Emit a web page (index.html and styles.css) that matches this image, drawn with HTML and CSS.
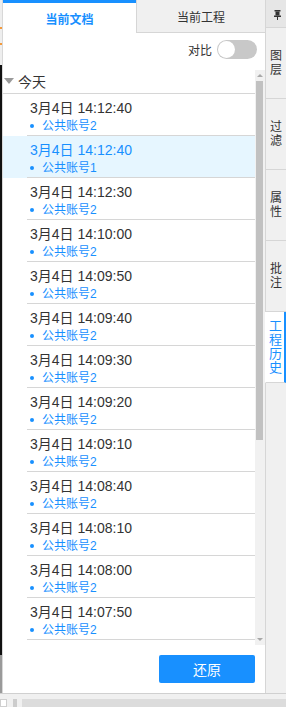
FILE: index.html
```html
<!DOCTYPE html>
<html lang="zh-CN">
<head>
    <meta charset="UTF-8">
    <meta name="viewport" content="width=device-width, initial-scale=1.0">
    <link rel="stylesheet" href="styles.css">
    <title>工程历史</title>
</head>
<body>
    <div class="app">
        <div class="main">
            <div class="edge"></div>

            <div class="panel">
                <div class="tabs">
                    <span class="tab active">当前文档</span>
                    <span class="tab">当前工程</span>
                </div>

                <div class="toolbar">
                    <span class="label">对比</span>
                    <span class="switch"><span class="knob"></span></span>
                </div>

                <div class="history">
                    <div class="list">
                        <div class="group"><span class="caret"></span>今天</div>

                        <div class="item"><div class="inner"><div class="time">3月4日 14:12:40</div><div class="user">公共账号2</div></div></div>
                        <div class="item selected"><div class="inner"><div class="time">3月4日 14:12:40</div><div class="user">公共账号1</div></div></div>
                        <div class="item"><div class="inner"><div class="time">3月4日 14:12:30</div><div class="user">公共账号2</div></div></div>
                        <div class="item"><div class="inner"><div class="time">3月4日 14:10:00</div><div class="user">公共账号2</div></div></div>
                        <div class="item"><div class="inner"><div class="time">3月4日 14:09:50</div><div class="user">公共账号2</div></div></div>
                        <div class="item"><div class="inner"><div class="time">3月4日 14:09:40</div><div class="user">公共账号2</div></div></div>
                        <div class="item"><div class="inner"><div class="time">3月4日 14:09:30</div><div class="user">公共账号2</div></div></div>
                        <div class="item"><div class="inner"><div class="time">3月4日 14:09:20</div><div class="user">公共账号2</div></div></div>
                        <div class="item"><div class="inner"><div class="time">3月4日 14:09:10</div><div class="user">公共账号2</div></div></div>
                        <div class="item"><div class="inner"><div class="time">3月4日 14:08:40</div><div class="user">公共账号2</div></div></div>
                        <div class="item"><div class="inner"><div class="time">3月4日 14:08:10</div><div class="user">公共账号2</div></div></div>
                        <div class="item"><div class="inner"><div class="time">3月4日 14:08:00</div><div class="user">公共账号2</div></div></div>
                        <div class="item"><div class="inner"><div class="time">3月4日 14:07:50</div><div class="user">公共账号2</div></div></div>
                    </div>

                    <div class="scrollbar">
                        <span class="arrow up"></span>
                        <div class="track"><div class="thumb"></div></div>
                        <span class="arrow down"></span>
                    </div>
                </div>

                <div class="footer">
                    <button class="restore">还原</button>
                </div>
            </div>

            <div class="sidebar">
                <div class="pin">
                    <svg width="7" height="10" viewBox="0 0 7 10">
                        <rect x="0.5" y="0" width="6" height="1.5" fill="#333"/>
                        <rect x="1.5" y="1.5" width="4" height="4" fill="#333"/>
                        <rect x="0" y="5.5" width="7" height="1.5" fill="#333"/>
                        <rect x="3" y="7" width="1" height="3" fill="#333"/>
                    </svg>
                </div>
                <div class="side-tab"><span>图层</span></div>
                <div class="side-tab"><span>过滤</span></div>
                <div class="side-tab"><span>属性</span></div>
                <div class="side-tab"><span>批注</span></div>
                <div class="side-tab active"><span>工程历史</span></div>
                <div class="side-rest"></div>
            </div>
        </div>

        <div class="statusbar">
            <span class="box"></span>
            <span class="grip"></span>
            <span class="bar"></span>
        </div>
    </div>
</body>
</html>
```

FILE: styles.css
```css
*{
    margin: 0;
    padding: 0;
    box-sizing: border-box;
}

body{
    font-family: "Liberation Sans", "Noto Sans CJK SC", sans-serif;
    color: #333;
    background: #f0f0f0;
}

.app{
    width: 286px;
    height: 707px;
    display: flex;
    flex-direction: column;
}

.main{
    height: 693px;
    display: flex;
}

.edge{
    width: 2px;
    background: linear-gradient(to bottom,
        #eeeeee 0 27px, #f39a3c 27px 29px, #eeeeee 29px 43px,
        #f39a3c 43px 45px, #eeeeee 45px 65px, #111111 65px 655px, #9a9a9a 655px);
}

.panel{
    flex: 1;
    display: flex;
    flex-direction: column;
    background: #fff;
    border-left: 1px solid #d8d8d8;
}

/* top tabs */

.tabs{
    display: flex;
    height: 33px;
}

.tab{
    flex: 1;
    display: flex;
    justify-content: center;
    align-items: center;
    font-size: 12px;
    background: #f0f0f0;
    border-left: 1px solid #d6d6d6;
    border-bottom: 1px solid #d6d6d6;
}

.tab.active{
    flex: 0 0 133px;
    background: #fff;
    color: #1890ff;
    font-weight: bold;
    border-left: none;
    border-bottom: none;
    border-top: 3px solid #1890ff;
}

.toolbar{
    height: 37px;
    display: flex;
    justify-content: flex-end;
    align-items: center;
    padding: 0 8px 4px 0;
    gap: 5px;
}

.label{
    font-size: 12px;
}

.switch{
    width: 40px;
    height: 19px;
    border-radius: 10px;
    background: #c8c8c8;
    display: flex;
    align-items: center;
    padding-left: 1px;
}

.knob{
    width: 17px;
    height: 17px;
    border-radius: 50%;
    background: #fff;
}

/* history list */

.history{
    height: 575px;
    display: flex;
}

.list{
    flex: 1;
    overflow: hidden;
}

.group{
    height: 24px;
    display: flex;
    align-items: center;
    gap: 4px;
    padding: 0 0 2px 1px;
    font-size: 14px;
    border-bottom: 1px solid #d6d6d6;
}

.caret{
    width: 0;
    height: 0;
    border-left: 5px solid transparent;
    border-right: 5px solid transparent;
    border-top: 6px solid #9a9a9a;
}

.item.selected{
    background: #e6f6ff;
}

.inner{
    margin-left: 24px;
    height: 42px;
    padding: 5px 0 0 3px;
    border-bottom: 1px solid #d6d6d6;
}

.time{
    font-size: 14px;
    line-height: 18px;
    color: #333;
}

.selected .time{
    color: #1890ff;
}

.user{
    font-size: 12px;
    line-height: 18px;
    color: #1890ff;
    display: flex;
    align-items: center;
    gap: 8px;
}

.user::before{
    content: "";
    width: 4px;
    height: 4px;
    border-radius: 50%;
    background: #1890ff;
}

.scrollbar{
    width: 10px;
    display: flex;
    flex-direction: column;
    align-items: center;
    background: #f1f1f1;
}

.arrow{
    width: 0;
    height: 0;
    margin: 4px 0;
    border-left: 3px solid transparent;
    border-right: 3px solid transparent;
}

.arrow.up{
    border-bottom: 3px solid #a8a8a8;
}

.arrow.down{
    border-top: 3px solid #a8a8a8;
}

.track{
    flex: 1;
    width: 100%;
    padding-left: 1px;
}

.thumb{
    width: 7px;
    height: 359px;
    background: #c1c1c1;
}

.footer{
    flex: 1;
    display: flex;
    justify-content: flex-end;
    align-items: flex-start;
    padding: 10px 10px 0 0;
}

.restore{
    width: 96px;
    height: 28px;
    border: none;
    border-radius: 2px;
    background: #1890ff;
    color: #fff;
    font-family: inherit;
    font-size: 14px;
}

/* right side tabs */

.sidebar{
    width: 21px;
    display: flex;
    flex-direction: column;
    background: #f0f0f0;
}

.pin{
    height: 28px;
    display: flex;
    justify-content: center;
    align-items: center;
    padding: 2px 0 0 2px;
    background: #e6e6e6;
    border-left: 1px solid #d6d6d6;
    border-bottom: 1px solid #d6d6d6;
}

.side-tab{
    height: 71px;
    display: flex;
    justify-content: center;
    align-items: center;
    padding-left: 1px;
    font-size: 12px;
    line-height: 14px;
    border-left: 1px solid #d6d6d6;
    border-bottom: 1px solid #d6d6d6;
}

.side-tab span{
    width: 13px;
    word-break: break-all;
}

.side-tab.active{
    background: #fff;
    color: #1890ff;
    font-size: 13px;
    border-left-color: #fff;
    border-right: 2px solid #1890ff;
}

.side-rest{
    flex: 1;
    border-left: 1px solid #d6d6d6;
}

/* bottom strip */

.statusbar{
    flex: 1;
    display: flex;
    align-items: flex-end;
    gap: 4px;
    border-top: 1px solid #d0d0d0;
}

.box{
    width: 7px;
    height: 8px;
    background: #fff;
    border: 1px solid #cfcfcf;
}

.grip{
    width: 4px;
    height: 8px;
    margin-left: 2px;
    background: #cccccc;
}

.bar{
    flex: 1;
    height: 8px;
    margin-left: 1px;
    background: #dcdcdc;
}
```
